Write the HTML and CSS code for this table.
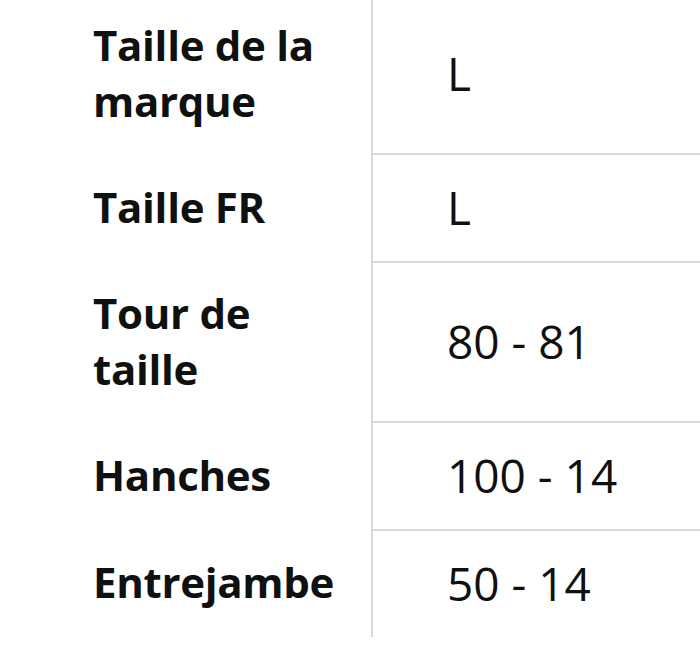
FILE: index.html
```html
<!DOCTYPE html>
<html lang="fr">
<head>
<meta charset="utf-8">
<link rel="stylesheet" href="styles.css">
</head>
<body>
<div class="size-table">
  <div class="row">
    <div class="label">Taille de la marque</div>
    <div class="value">L</div>
  </div>
  <div class="row">
    <div class="label">Taille FR</div>
    <div class="value">L</div>
  </div>
  <div class="row">
    <div class="label">Tour de taille</div>
    <div class="value">80 - 81</div>
  </div>
  <div class="row">
    <div class="label">Hanches</div>
    <div class="value">100 - 14</div>
  </div>
  <div class="row last">
    <div class="label">Entrejambe</div>
    <div class="value">50 - 14</div>
  </div>
</div>
</body>
</html>
```

FILE: styles.css
```css
html, body {
  margin: 0;
  padding: 0;
  background: #ffffff;
}

body {
  width: 700px;
  height: 663px;
  overflow: hidden;
  font-family: "Open Sans", "Noto Sans", sans-serif;
  color: #0f1111;
}

.size-table {
  margin-top: -5px;
  display: flex;
  flex-direction: column;
}

.row {
  display: grid;
  grid-template-columns: 371px 1fr;
  min-height: 108px;
}

.row.last {
  min-height: 106px;
}

.label {
  padding: 22px 20px 26px 93px;
  font-weight: 700;
  font-size: 42px;
  line-height: 56px;
  letter-spacing: -0.3px;
  display: flex;
  align-items: center;
}

.value {
  border-left: 2px solid #d5d9d9;
  border-bottom: 2px solid #d5d9d9;
  padding-left: 74px;
  padding-bottom: 2px;
  font-size: 46px;
  line-height: 56px;
  display: flex;
  align-items: center;
}

.row.last .value {
  border-bottom: none;
}
```
